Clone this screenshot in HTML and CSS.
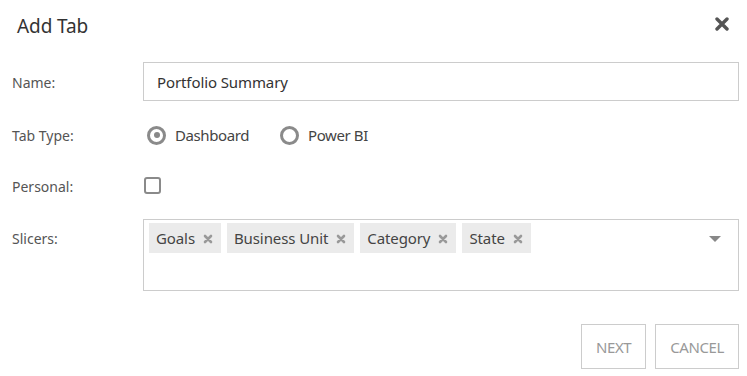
FILE: index.html
```html
<!DOCTYPE html>
<html>
<head>
<meta charset="utf-8">
<link rel="stylesheet" href="styles.css">
</head>
<body>
<div class="dialog">
  <div class="header">
    <h1 class="title">Add Tab</h1>
    <svg class="close" width="14" height="14" viewBox="0 0 14 14"><path d="M2 2 L12 12 M12 2 L2 12" stroke="#555" stroke-width="3.4" stroke-linecap="round"/></svg>
  </div>
  <div class="form">
    <div class="row row-name">
      <label class="label">Name:</label>
      <div class="input">Portfolio Summary</div>
    </div>
    <div class="row row-type">
      <label class="label">Tab Type:</label>
      <div class="radios">
        <span class="radio checked"></span><span class="radio-text">Dashboard</span>
        <span class="radio"></span><span class="radio-text">Power BI</span>
      </div>
    </div>
    <div class="row row-personal">
      <label class="label">Personal:</label>
      <span class="checkbox"></span>
    </div>
    <div class="row row-slicers">
      <label class="label">Slicers:</label>
      <div class="multiselect">
        <div class="tags">
          <span class="tag">Goals<svg class="tag-x" width="10" height="10" viewBox="0 0 10 10"><path d="M2 2 L8 8 M8 2 L2 8" stroke="#999" stroke-width="2.6" stroke-linecap="round"/></svg></span>
          <span class="tag">Business Unit<svg class="tag-x" width="10" height="10" viewBox="0 0 10 10"><path d="M2 2 L8 8 M8 2 L2 8" stroke="#999" stroke-width="2.6" stroke-linecap="round"/></svg></span>
          <span class="tag">Category<svg class="tag-x" width="10" height="10" viewBox="0 0 10 10"><path d="M2 2 L8 8 M8 2 L2 8" stroke="#999" stroke-width="2.6" stroke-linecap="round"/></svg></span>
          <span class="tag">State<svg class="tag-x" width="10" height="10" viewBox="0 0 10 10"><path d="M2 2 L8 8 M8 2 L2 8" stroke="#999" stroke-width="2.6" stroke-linecap="round"/></svg></span>
        </div>
        <svg class="caret" width="12" height="7" viewBox="0 0 12 7"><path d="M0 0 H12 L6 6 Z" fill="#888"/></svg>
      </div>
    </div>
  </div>
  <div class="footer">
    <button class="btn">NEXT</button>
    <button class="btn">CANCEL</button>
  </div>
</div>
</body>
</html>
```

FILE: styles.css
```css
html, body {
  margin: 0;
  padding: 0;
  background: #fff;
}
body {
  font-family: "Noto Sans", "Open Sans", sans-serif;
  color: #333;
  width: 747px;
  height: 376px;
  overflow: hidden;
}
.dialog {
  padding: 0 8px 0 12px;
}
.header {
  display: flex;
  align-items: center;
  justify-content: space-between;
  height: 52px;
  padding-left: 5px;
  padding-right: 10px;
}
.title {
  margin: 0;
  font-size: 19px;
  font-weight: 400;
  color: #333;
  letter-spacing: -0.1px;
}
.close {
  display: block;
  margin-top: -4px;
}
.form {
  padding-top: 10px;
}
.row {
  display: flex;
  align-items: center;
}
.label {
  width: 131px;
  flex: none;
  font-size: 14px;
  color: #555;
}
.row-name .label {
  padding-top: 2px;
}
.input {
  flex: 1;
  height: 37px;
  border: 1px solid #ccc;
  display: flex;
  align-items: center;
  padding-left: 13px;
  font-size: 15px;
  color: #333;
  letter-spacing: -0.1px;
}
.row-type {
  height: 30px;
  margin-top: 19px;
}
.radios {
  display: flex;
  align-items: center;
}
.radio {
  box-sizing: border-box;
  width: 19px;
  height: 19px;
  border: 3px solid #8a8a8a;
  border-radius: 50%;
  margin-left: 4px;
  position: relative;
  flex: none;
}
.radio.checked::after {
  content: "";
  position: absolute;
  left: 3.5px;
  top: 3.5px;
  width: 6px;
  height: 6px;
  border-radius: 50%;
  background: #888;
}
.radio-text {
  font-size: 15px;
  color: #444;
  margin-left: 9px;
  margin-right: 27px;
  letter-spacing: -0.4px;
}
.radio-text:last-child {
  margin-right: 0;
}
.row-personal {
  height: 30px;
  margin-top: 21px;
}
.checkbox {
  box-sizing: border-box;
  width: 17px;
  height: 17px;
  border: 2px solid #8a8a8a;
  border-radius: 3px;
  margin-left: 1px;
  margin-top: -1px;
}
.row-slicers {
  align-items: flex-start;
  margin-top: 18px;
}
.row-slicers .label {
  padding-top: 10px;
}
.multiselect {
  flex: 1;
  height: 67px;
  border: 1px solid #ccc;
  display: flex;
  align-items: flex-start;
  justify-content: space-between;
  padding: 3px 17px 0 5px;
}
.tags {
  display: flex;
  gap: 6px;
}
.tag {
  display: flex;
  align-items: center;
  height: 30px;
  background: #ebebeb;
  padding: 0 8px 0 7px;
  font-size: 15px;
  color: #444;
  letter-spacing: -0.1px;
}
.tag-x {
  margin-left: 8px;
  margin-top: 1px;
}
.caret {
  margin-top: 13px;
}
.footer {
  display: flex;
  justify-content: flex-end;
  gap: 9px;
  margin-top: 33px;
}
.btn {
  height: 45px;
  border: 1px solid #ccc;
  background: #fff;
  font-family: "Noto Sans", "Open Sans", sans-serif;
  font-size: 15px;
  color: #999;
  padding: 0 14px;
  letter-spacing: -0.4px;
}
```
